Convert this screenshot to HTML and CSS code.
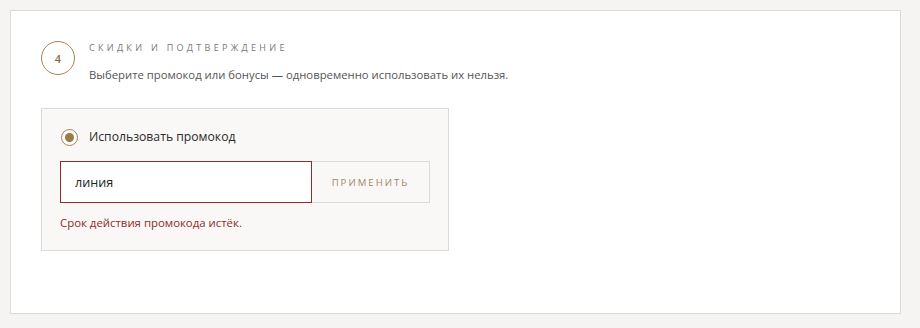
FILE: index.html
```html
<!DOCTYPE html>
<html lang="ru">
  <head>
    <meta charset="UTF-8">
    <title>Скидки и подтверждение</title>
    <link rel="stylesheet" href="styles.css">
  </head>
  <body>
    <div class="step-card">
      <div class="step-header">
        <div class="step-number">4</div>
        <div class="step-titles">
          <div class="step-title">Скидки и подтверждение</div>
          <div class="step-hint">Выберите промокод или бонусы — одновременно использовать их нельзя.</div>
        </div>
      </div>

      <div class="promo-panel">
        <label class="radio-row">
          <span class="radio checked"></span>
          <span class="radio-label">Использовать промокод</span>
        </label>

        <div class="promo-form">
          <input class="promo-input error" type="text" value="линия">
          <button class="promo-apply">Применить</button>
        </div>

        <div class="promo-error">Срок действия промокода истёк.</div>
      </div>
    </div>
  </body>
</html>
```

FILE: styles.css
```css
body {
  font-family: "Open Sans", "Noto Sans", sans-serif;
  background: #f5f4f2;
  color: #333;
  margin: 0;
  padding: 10px 19px 11px 10px;
}

.step-card {
  background: #fff;
  border: 1px solid #dcdad6;
  height: 304px;
  box-sizing: border-box;
  padding: 30px 30px 0 30px;
}

.step-header {
  display: flex;
  align-items: flex-start;
  gap: 14px;
}

.step-number {
  width: 34px;
  height: 34px;
  box-sizing: border-box;
  border: 1px solid #a68457;
  border-radius: 50%;
  display: flex;
  align-items: center;
  justify-content: center;
  font-size: 11px;
  font-weight: 600;
  color: #8a6a40;
  flex-shrink: 0;
}

.step-title {
  font-size: 9px;
  letter-spacing: 3.3px;
  text-transform: uppercase;
  color: #7a7a7a;
  line-height: 12px;
  margin-top: 1px;
}

.step-hint {
  font-size: 11.3px;
  color: #555;
  margin-top: 13px;
  line-height: 16px;
}

.promo-panel {
  width: 408px;
  box-sizing: border-box;
  margin-top: 25px;
  background: #f9f8f6;
  border: 1px solid #dcdad6;
  padding: 19px 18px 19px 18px;
}

.radio-row {
  display: flex;
  align-items: center;
  gap: 11px;
  margin-left: 1px;
}

.radio {
  width: 17px;
  height: 17px;
  box-sizing: border-box;
  border: 1px solid #a68457;
  border-radius: 50%;
  background: #fff;
  display: flex;
  align-items: center;
  justify-content: center;
}

.radio.checked::after {
  content: "";
  width: 9px;
  height: 9px;
  border-radius: 50%;
  background: #9c7a48;
}

.radio-label {
  font-size: 12.2px;
  color: #2b2b2b;
  line-height: 18px;
}

.promo-form {
  display: flex;
  margin-top: 15px;
  height: 42px;
}

.promo-input {
  width: 252px;
  box-sizing: border-box;
  border: 1px solid #dcdad6;
  background: #fff;
  padding: 0 14px;
  font-family: inherit;
  font-size: 12.6px;
  color: #222;
  outline: none;
}

.promo-input.error {
  border-color: #8e2c2c;
}

.promo-apply {
  width: 118px;
  box-sizing: border-box;
  border: 1px solid #dcdad6;
  border-left: none;
  background: #f9f8f6;
  font-family: inherit;
  font-size: 9.6px;
  letter-spacing: 2px;
  text-transform: uppercase;
  color: #9c8868;
  cursor: pointer;
}

.promo-error {
  margin-top: 12px;
  font-size: 11.4px;
  color: #8e2c2c;
  line-height: 16px;
}
```
